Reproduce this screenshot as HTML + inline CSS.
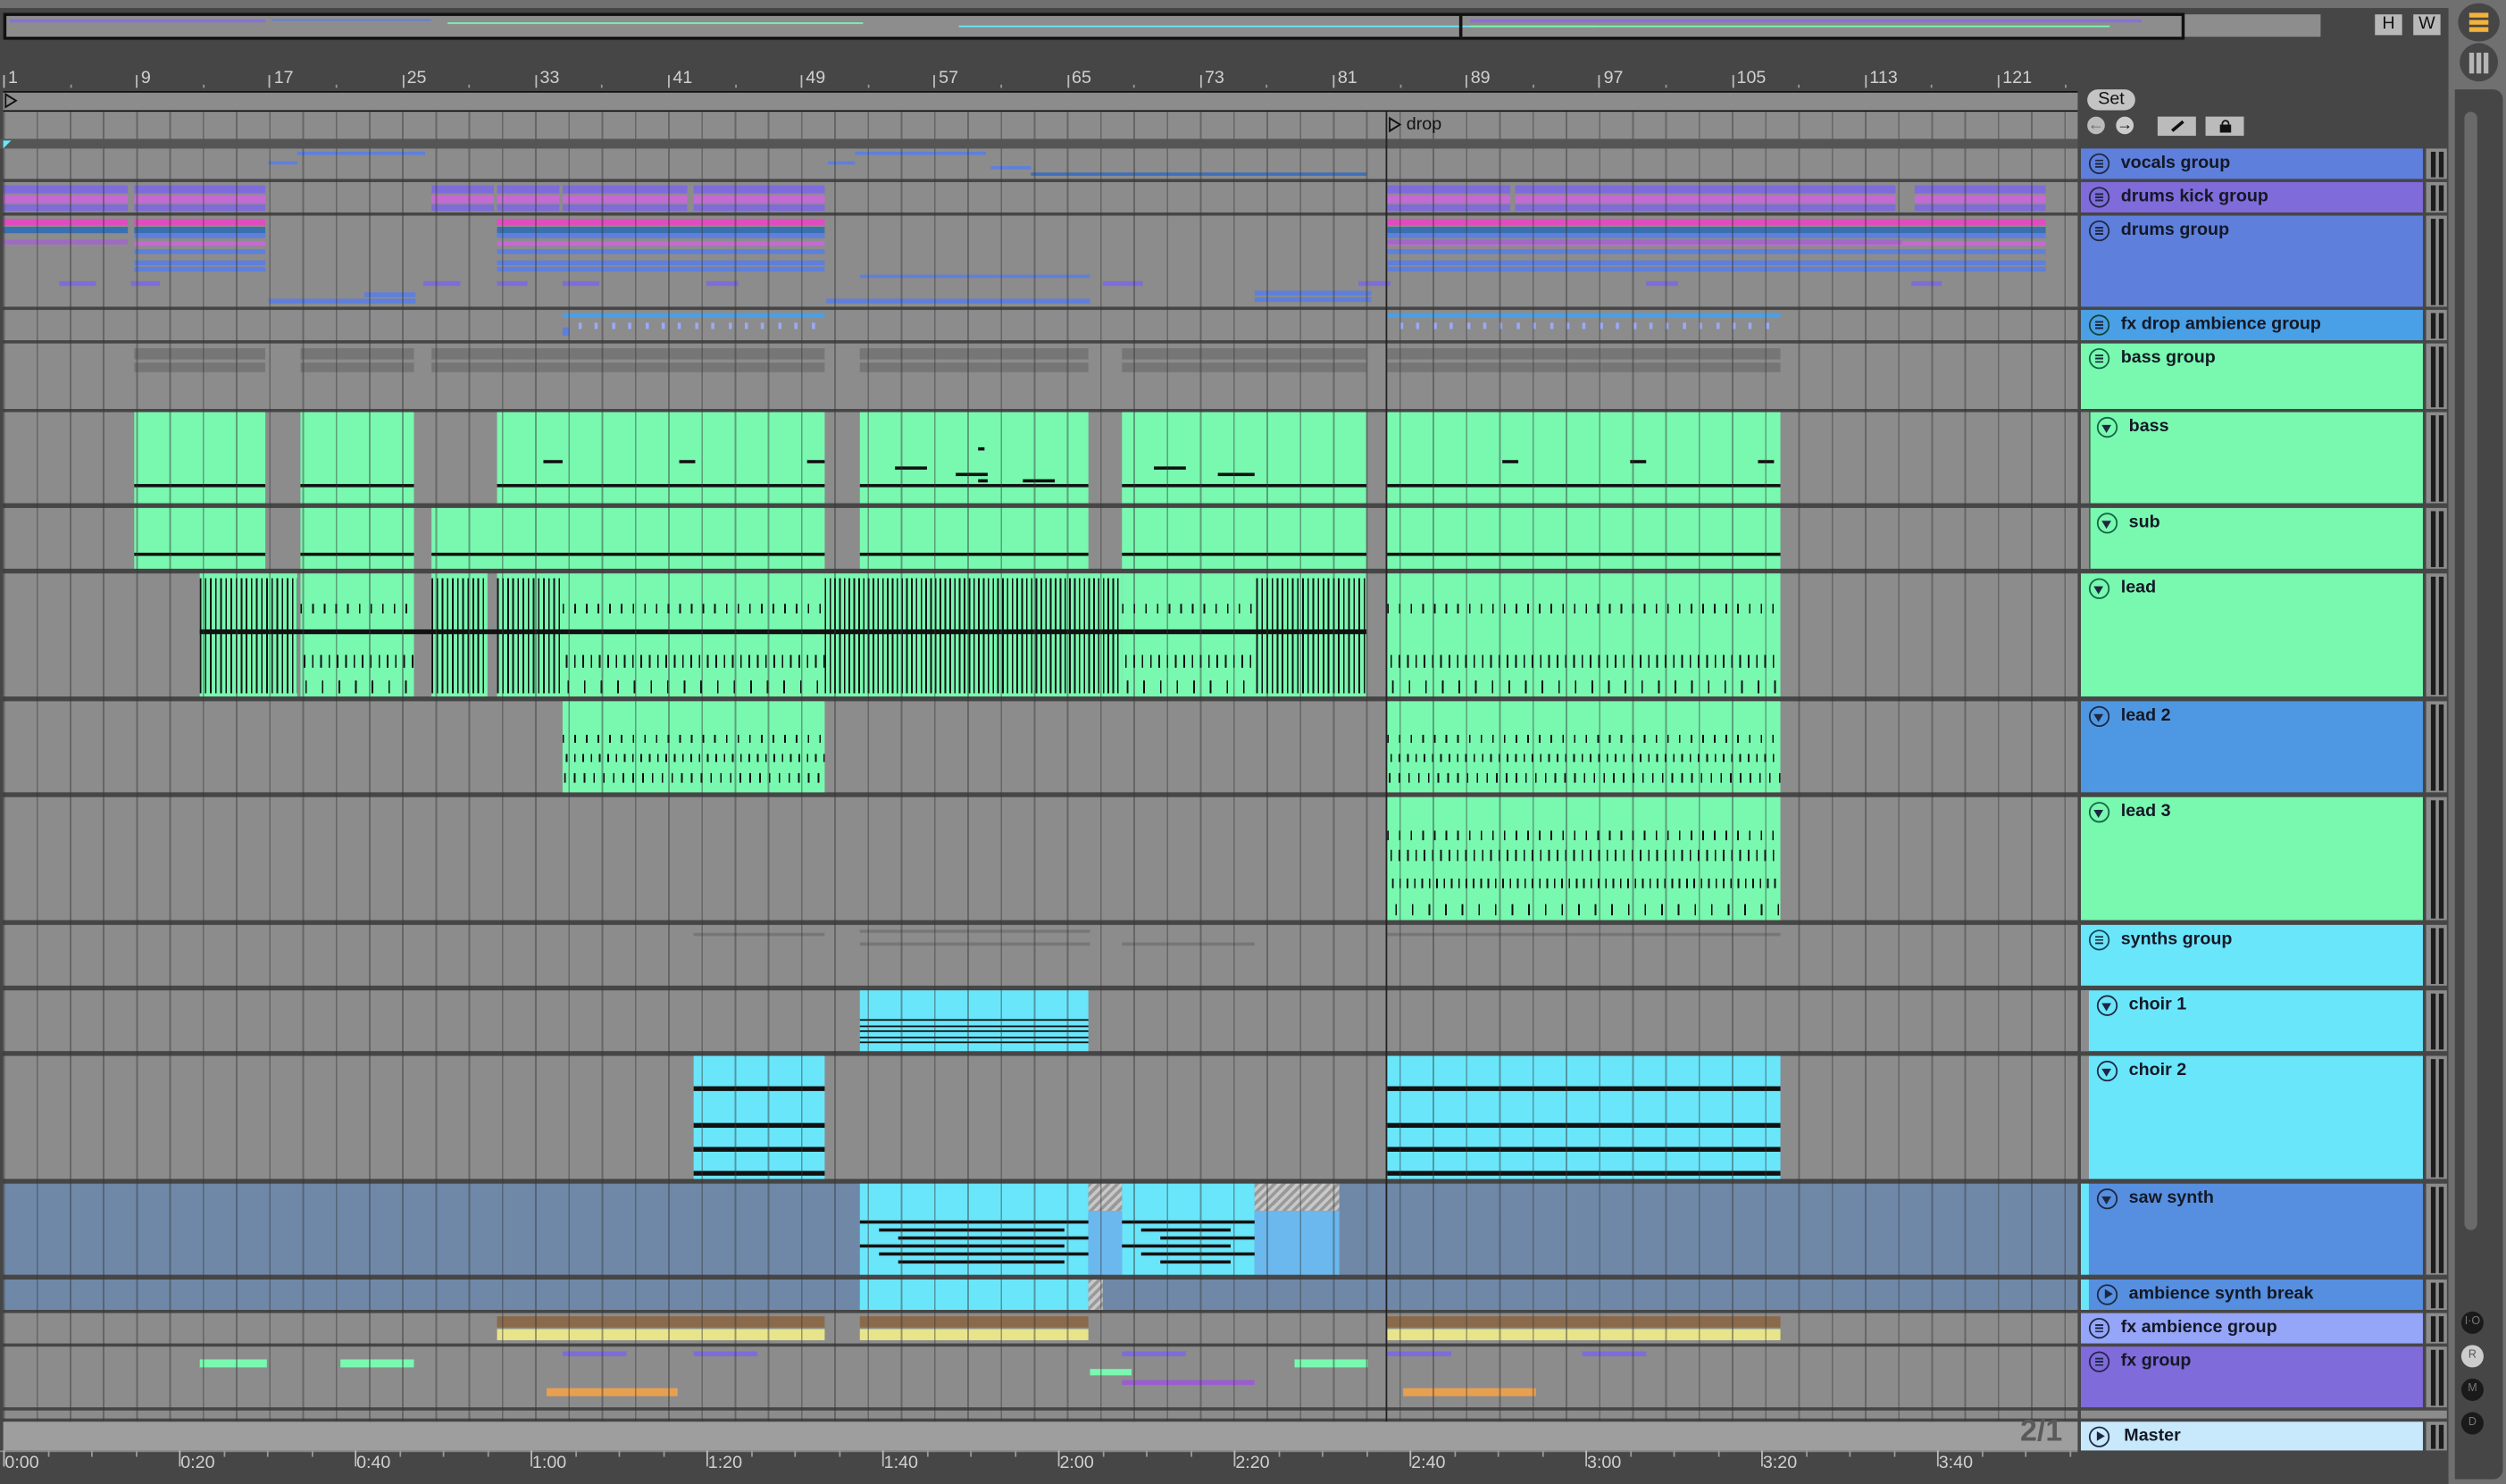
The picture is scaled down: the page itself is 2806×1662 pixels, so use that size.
<!DOCTYPE html>
<html><head><meta charset="utf-8">
<style>
html,body{margin:0;padding:0;background:#464646;overflow:hidden}
#w{position:absolute;left:0;top:0;width:1568px;height:929px;transform:scale(1.78954,1.78902);transform-origin:0 0;background:#464646;font-family:"Liberation Sans",sans-serif}
.a{position:absolute}
.hd{position:absolute;left:1302px;width:214px;font-weight:bold;font-size:11px;color:#141826;box-sizing:border-box}
.hd span{position:absolute;top:3px}
.ic{position:absolute;width:11px;height:11px;border:1.3px solid #1e2740;border-radius:50%;top:3px}
.ic.m::after{content:"";position:absolute;left:3px;top:3px;width:5px;height:5px;background:linear-gradient(#1e2740 0 1px,transparent 1px 2px,#1e2740 2px 3px,transparent 3px 4px,#1e2740 4px 5px)}
.ic.d::after{content:"";position:absolute;left:2px;top:3.5px;border-left:3.5px solid transparent;border-right:3.5px solid transparent;border-top:5px solid #1e2740}
.ic.r::after{content:"";position:absolute;left:4px;top:2px;border-top:3.5px solid transparent;border-bottom:3.5px solid transparent;border-left:5px solid #1e2740}
.mt{position:absolute;left:1518px;width:13px;background:#8c8c8c}
.mt::before,.mt::after{content:"";position:absolute;top:2px;bottom:1px;width:3px;background:#1c1c1c}
.mt::before{left:3px}.mt::after{left:8px}
.num{position:absolute;top:43px;color:#d0d0d0;font-size:11px}
.tm{position:absolute;top:910px;color:#d0d0d0;font-size:11px}
.rb{position:absolute;left:1540px;width:14px;height:14px;border-radius:50%;background:#1a1a1a;color:#777;font-size:7px;text-align:center;line-height:14px}
</style></head><body><div id="w">
<div class="a" style="left:0;top:0;width:1568px;height:5px;background:#707070"></div>
<div class="a" style="left:1532px;top:0;width:36px;height:929px;background:#707070"></div>
<div class="a" style="left:1536px;top:56px;width:30px;height:870px;background:#464646;border-radius:0 6px 6px 0"></div>
<div class="a" style="left:1542px;top:70px;width:8px;height:700px;background:#6a6a6a;border-radius:4px"></div>
<div class="a" style="left:1538px;top:2px;width:26px;height:24px;border-radius:50%;background:#464646"></div>
<div class="a" style="left:1545px;top:8px;width:12px;height:2.5px;background:#f3b23a;box-shadow:0 4.5px 0 #f3b23a,0 9px 0 #f3b23a"></div>
<div class="a" style="left:1539px;top:27px;width:24px;height:24px;border-radius:50%;background:#464646"></div>
<div class="a" style="left:1545px;top:33px;width:2.5px;height:13px;background:#b5b5b5;box-shadow:4.5px 0 0 #b5b5b5,9px 0 0 #b5b5b5"></div>
<div class="a" style="left:2px;top:8px;width:1365px;height:17px;background:#8d8d8d;border:2px solid #111;box-sizing:border-box"></div>
<div class="a" style="left:1367px;top:9px;width:85px;height:14px;background:#8d8d8d"></div>
<div class="a" style="left:1486px;top:9px;width:17px;height:13px;background:#b8b8b8;font-size:11px;text-align:center;line-height:13px;color:#111">H</div>
<div class="a" style="left:1510px;top:9px;width:17px;height:13px;background:#b8b8b8;font-size:11px;text-align:center;line-height:13px;color:#111">W</div>
<div id="ov"></div>
<div id="rl"></div>
<div class="a" style="left:2px;top:57px;width:1298px;height:13px;background:#8c8c8c;border-top:1.5px solid #111;border-bottom:1.5px solid #111;box-sizing:border-box"></div>
<div class="a" style="left:3px;top:58px;border-top:5.5px solid transparent;border-bottom:5.5px solid transparent;border-left:8px solid #111"></div>
<div class="a" style="left:4px;top:60px;border-top:3.5px solid transparent;border-bottom:3.5px solid transparent;border-left:5px solid #8c8c8c"></div>
<div class="a" style="left:2px;top:70px;width:1298px;height:17px;background:#8c8c8c"></div>
<div class="a" style="left:0;top:87px;width:1300px;height:6px;background:#555"></div>
<div class="a" style="left:2px;top:88px;border-right:5px solid transparent;border-top:5px solid #6ae6fb"></div>
<div id="tr"></div>
<div id="cl"></div>
<div class="a" id="grid" style="left:2px;top:93px;width:1298px;height:815px;background:repeating-linear-gradient(90deg,rgba(55,55,55,.45) 0 1px,transparent 1px 20.8px);pointer-events:none"></div>
<div class="a" style="left:2px;top:70px;width:1298px;height:17px;background:repeating-linear-gradient(90deg,rgba(55,55,55,.45) 0 1px,transparent 1px 20.8px)"></div>
<div class="a" style="left:869px;top:73px;border-top:5.5px solid transparent;border-bottom:5.5px solid transparent;border-left:8px solid #111"></div>
<div class="a" style="left:870px;top:75px;border-top:3.5px solid transparent;border-bottom:3.5px solid transparent;border-left:5px solid #8c8c8c"></div>
<div class="a" style="left:880px;top:72px;font-size:11px;color:#111">drop</div>
<div class="a" style="left:867px;top:70px;width:1px;height:838px;background:#222"></div>
<div class="a" style="left:1306px;top:56px;width:30px;height:13px;border-radius:7px;background:#c4c4c4;font-size:11px;text-align:center;line-height:13px;color:#111">Set</div>
<div class="a" style="left:1306px;top:73px;width:11px;height:11px;border-radius:50%;background:#bbb;color:#666;font-size:10px;line-height:11px;text-align:center;font-weight:bold">&#8592;</div>
<div class="a" style="left:1324px;top:73px;width:11px;height:11px;border-radius:50%;background:#ccc;color:#111;font-size:10px;line-height:11px;text-align:center;font-weight:bold">&#8594;</div>
<div class="a" style="left:1350px;top:73px;width:24px;height:12px;background:#bbb"><div class="a" style="left:8px;top:5px;width:9px;height:1.8px;background:#111;transform:rotate(-40deg)"></div></div>
<div class="a" style="left:1380px;top:73px;width:24px;height:12px;background:#bbb"><div class="a" style="left:9px;top:5px;width:7px;height:5px;background:#111"></div><div class="a" style="left:10px;top:2px;width:3px;height:4px;border:1.3px solid #111;border-bottom:none;border-radius:3px 3px 0 0"></div></div>
<div id="hdrs">
<div class="hd" style="top:93px;height:19px;background:#5e7fdc"><i class="ic m" style="left:5px"></i><span style="left:25px">vocals group</span></div>
<div class="hd" style="top:114px;height:19px;background:#7f6bd9"><i class="ic m" style="left:5px"></i><span style="left:25px">drums kick group</span></div>
<div class="hd" style="top:135px;height:57px;background:#5e7fdc"><i class="ic m" style="left:5px"></i><span style="left:25px">drums group</span></div>
<div class="hd" style="top:194px;height:19px;background:#4aa0e6"><i class="ic m" style="left:5px;border-color:#143"></i><span style="left:25px">fx drop ambience group</span></div>
<div class="hd" style="top:215px;height:41px;background:#79f8b0"><i class="ic m" style="left:5px;border-color:#164"></i><span style="left:25px">bass group</span></div>
<div class="hd" style="top:258px;height:57px;background:#79f8b0;border-left:5px solid #8c8c8c;left:1302px"><div class="a" style="left:0;top:0;width:1px;height:57px;background:#3a6a50"></div><i class="ic d" style="left:5px;border-color:#164"></i><span style="left:25px">bass</span></div>
<div class="hd" style="top:318px;height:38px;background:#79f8b0;border-left:5px solid #8c8c8c"><div class="a" style="left:0;top:0;width:1px;height:38px;background:#3a6a50"></div><i class="ic d" style="left:5px;border-color:#164"></i><span style="left:25px">sub</span></div>
<div class="hd" style="top:359px;height:77px;background:#79f8b0"><i class="ic d" style="left:5px;border-color:#164"></i><span style="left:25px">lead</span></div>
<div class="hd" style="top:439px;height:57px;background:#4e98e3"><i class="ic d" style="left:5px"></i><span style="left:25px">lead 2</span></div>
<div class="hd" style="top:499px;height:77px;background:#79f8b0"><i class="ic d" style="left:5px;border-color:#164"></i><span style="left:25px">lead 3</span></div>
<div class="hd" style="top:579px;height:38px;background:#6ae6fb"><i class="ic m" style="left:5px;border-color:#145"></i><span style="left:25px">synths group</span></div>
<div class="hd" style="top:620px;height:38px;background:#6ae6fb;border-left:5px solid #8c8c8c"><i class="ic d" style="left:5px"></i><span style="left:25px">choir 1</span></div>
<div class="hd" style="top:661px;height:77px;background:#6ae6fb;border-left:5px solid #8c8c8c"><i class="ic d" style="left:5px"></i><span style="left:25px">choir 2</span></div>
<div class="hd" style="top:741px;height:57px;background:#568fe0;border-left:5px solid #6ae6fb"><i class="ic d" style="left:5px"></i><span style="left:25px">saw synth</span></div>
<div class="hd" style="top:801px;height:19px;background:#568fe0;border-left:5px solid #6ae6fb"><i class="ic r" style="left:5px"></i><span style="left:25px">ambience synth break</span></div>
<div class="hd" style="top:822px;height:19px;background:#95a5f7"><i class="ic m" style="left:5px"></i><span style="left:25px">fx ambience group</span></div>
<div class="hd" style="top:843px;height:38px;background:#7f6bd9"><i class="ic m" style="left:5px;border-color:#2a2050"></i><span style="left:25px">fx group</span></div>
<div class="a" style="left:1302px;top:883px;width:229px;height:5px;background:#8c8c8c"></div>
<div class="hd" style="top:890px;height:18px;background:#c8e8fb"><i class="ic r" style="left:5px"></i><span style="left:27px">Master</span></div>
</div>
<div class="a" style="left:2px;top:890px;width:1298px;height:18px;background:#9e9e9e"></div>
<div class="a" style="left:1264px;top:886px;font-size:19px;font-weight:bold;color:#5a5a5a">2/1</div>
<div class="a" style="left:0;top:908px;width:1300px;height:1px;background:#888"></div>
<div id="tml"></div>
<div class="rb" style="top:821px">I·O</div>
<div class="rb" style="top:842px;background:#ccc;color:#555">R</div>
<div class="rb" style="top:863px">M</div>
<div class="rb" style="top:884px">D</div>
</div>
<script>
function R(p,x,y,w,h,c,extra){var d=document.createElement('div');d.className='a';d.style.cssText='left:'+x+'px;top:'+y+'px;width:'+w+'px;height:'+h+'px;background:'+c+';'+(extra||'');p.appendChild(d);return d;}
var tr=document.getElementById('tr'),cl=document.getElementById('cl');
var rows=[[93,19],[114,19],[135,57],[194,19],[215,41],[258,57],[318,38],[359,77],[439,57],[499,77],[579,38],[620,38],[661,77],[741,57],[801,19],[822,19],[843,38]];
rows.forEach(function(r,i){var c=(i==13||i==14)?'#6f88a8':'#8c8c8c';R(tr,2,r[0],1298,r[1],c);var m=R(tr,1518,r[0],13,r[1],'#8c8c8c');m.className='mt';});
R(tr,2,883,1298,5,'#8c8c8c');
var mx=R(tr,1518,890,13,18,'#8c8c8c');mx.className='mt';
var rl=document.getElementById('rl');
[1,9,17,25,33,41,49,57,65,73,81,89,97,105,113,121].forEach(function(b){var x=2+(b-1)*10.4;R(rl,x,47,1,8,'#bbb');var t=document.createElement('div');t.className='num';t.style.left=(x+3)+'px';t.textContent=b;rl.appendChild(t);R(rl,x+41.6,53,1,2,'#999');});
var tm=document.getElementById('tml');
['0:00','0:20','0:40','1:00','1:20','1:40','2:00','2:20','2:40','3:00','3:20','3:40'].forEach(function(s,i){var x=2+i*110;R(tm,x,908,1,10,'#bbb');var t=document.createElement('div');t.className='tm';t.style.left=(x+1)+'px';t.textContent=s;tm.appendChild(t);for(var k=1;k<4;k++)R(tm,x+k*27.5,908,1,4,'#999');});
var ov=document.getElementById('ov');
R(ov,6,12,160,2,'#8a6fd8');R(ov,170,12,100,1,'#5e7fdc');R(ov,280,14,260,1,'#79f8b0');R(ov,600,16,400,1,'#6ae6fb');R(ov,920,12,420,2,'#8a6fd8');R(ov,920,16,400,1,'#79f8b0');R(ov,913,9,2,14,'#111');
function G(x1,x2,y,h,c){return R(cl,x1,y,x2-x1,h,c);}
var green='#79f8b0',cyan='#6ae6fb';
G(186,266,95,2,'#5e7fdc');G(168,186,101,2,'#5e7fdc');G(535,617,95,2,'#5e7fdc');G(518,535,101,2,'#5e7fdc');G(620,645,104,2,'#5e7fdc');G(645,855,108,2,'#3f6fb8');
[[2,80],[84,166],[270,309],[311,350],[352,430],[434,516],[868,945],[948,1186],[1198,1280]].forEach(function(s){G(s[0],s[1],116,5,'#7f6bd9');G(s[0],s[1],122,5,'#c46ad4');G(s[0],s[1],128,4,'#7f6bd9');});
[[2,80],[84,166],[311,516],[868,1280]].forEach(function(s){G(s[0],s[1],137,4,'#e04cc0');G(s[0],s[1],142,4,'#3a70b0');});
[[84,166],[311,516],[868,1280]].forEach(function(s){G(s[0],s[1],146,3,'#5e7fdc');G(s[0],s[1],151,3,'#c46ad4');G(s[0],s[1],156,3,'#5e7fdc');G(s[0],s[1],163,3,'#5e7fdc');G(s[0],s[1],167,3,'#5e7fdc');});
G(2,80,150,3,'#a06ac4');G(868,1190,150,3,'#a06ac4');
[[37,60],[82,100],[265,288],[311,330],[352,375],[442,462],[690,715],[850,870],[1030,1050],[1196,1215]].forEach(function(s){G(s[0],s[1],176,3,'#7f6bd9');});
G(168,260,187,3,'#5e7fdc');G(228,260,183,3,'#5e7fdc');G(517,682,187,3,'#5e7fdc');G(538,682,172,2,'#5e7fdc');G(785,858,186,3,'#5e7fdc');G(785,858,182,3,'#5e7fdc');
G(352,516,196,3,'#4aa0e6');G(868,1114,196,3,'#4aa0e6');
for(var x=362;x<516;x+=10.4)G(x,x+2,202,4,'#9aaaf5');for(var x=876;x<1114;x+=10.4)G(x,x+2,202,4,'#9aaaf5');
G(352,356,205,5,'#5e7fdc');
[[84,166],[188,259],[270,516],[538,681],[702,855],[868,1114]].forEach(function(s){G(s[0],s[1],218,7,'#767676');G(s[0],s[1],227,6,'#767676');});
[[84,166],[188,259],[311,516],[538,681],[702,855],[868,1114]].forEach(function(s){G(s[0],s[1],258,57,green);G(s[0],s[1],303,2,'#111');});
[[340,352],[425,435],[505,516],[940,950],[1020,1030],[1100,1110]].forEach(function(s){G(s[0],s[1],288,2,'#111');});
[[560,580],[598,618],[640,660],[722,742],[762,785],[612,618]].forEach(function(s,i){G(s[0],s[1],292+(i%3)*4,2,'#111');});
G(612,616,280,2,'#111');
[[84,166],[188,259],[270,516],[538,681],[702,855],[868,1114]].forEach(function(s){G(s[0],s[1],318,38,green);G(s[0],s[1],346,2,'#111');});
function stripes(x1,x2,y,h,step){var d=G(x1,x2,y,h,'transparent');d.style.background='repeating-linear-gradient(90deg,#111 0 1px,transparent 1px '+step+'px)';}
[[125,186],[188,259],[270,305],[311,516],[516,702],[702,786],[786,855],[868,1114]].forEach(function(s){G(s[0],s[1],359,77,green);});
stripes(125,186,362,72,3.2);stripes(516,702,362,72,3);stripes(786,855,362,72,3.2);stripes(270,305,362,72,3.2);stripes(311,352,362,72,3.2);
G(125,855,394,3,'#111');
[[188,259],[352,516],[702,786],[868,1114]].forEach(function(s){stripes(s[0],s[1],378,6,7.3);stripes(s[0]+2,s[1],410,8,5.2);stripes(s[0]+3,s[1],426,8,10.4);});
[[352,516],[868,1114]].forEach(function(s){G(s[0],s[1],439,57,green);stripes(s[0],s[1],460,5,7.3);stripes(s[0]+2,s[1],472,5,5.2);stripes(s[0]+1,s[1],484,6,6.1);});
G(868,1114,499,77,green);stripes(868,1114,520,6,7.3);stripes(870,1114,532,7,5.2);stripes(871,1114,550,6,4.6);stripes(873,1114,566,7,10.4);
G(434,516,584,2,'#777');G(538,682,582,2,'#777');G(538,682,590,2,'#777');G(702,785,590,2,'#777');G(868,1114,584,2,'#777');
G(538,681,620,38,cyan);for(var k=0;k<5;k++)G(538,681,638+k*3.5,1.2,'#111');
[[434,516],[868,1114]].forEach(function(s){G(s[0],s[1],661,77,cyan);G(s[0],s[1],680,3,'#111');G(s[0],s[1],703,3,'#111');G(s[0],s[1],718,3,'#111');G(s[0],s[1],733,3,'#111');});
G(538,681,741,57,cyan);G(702,785,741,57,cyan);G(681,702,741,17,'repeating-linear-gradient(135deg,#999 0 2px,#c8c8c8 2px 4px)');G(785,838,741,17,'repeating-linear-gradient(135deg,#999 0 2px,#c8c8c8 2px 4px)');G(681,702,758,40,'#6ab8ee');G(785,838,758,40,'#6ab8ee');
[[538,681],[702,785]].forEach(function(s){for(var k=0;k<6;k++){G(s[0]+(k%3)*12,s[1]-(k%2)*15,764+k*5,1.8,'#111');}});
G(538,681,801,19,cyan);G(681,690,801,19,'repeating-linear-gradient(135deg,#999 0 2px,#c8c8c8 2px 4px)');
[[311,516],[538,681],[868,1114]].forEach(function(s){G(s[0],s[1],824,7,'#8a6a4a');G(s[0],s[1],832,7,'#e8e48a');});
G(125,167,851,5,'#79f8b0');G(213,259,851,5,'#79f8b0');G(810,856,851,5,'#79f8b0');G(682,708,857,4,'#79f8b0');
G(352,392,846,3,'#7f6bd9');G(434,474,846,3,'#7f6bd9');G(702,742,846,3,'#7f6bd9');G(868,908,846,3,'#7f6bd9');G(990,1030,846,3,'#7f6bd9');G(702,785,864,3,'#9a5ed0');
G(342,424,869,5,'#e8a050');G(878,961,869,5,'#e8a050');
</script>
</body></html>
